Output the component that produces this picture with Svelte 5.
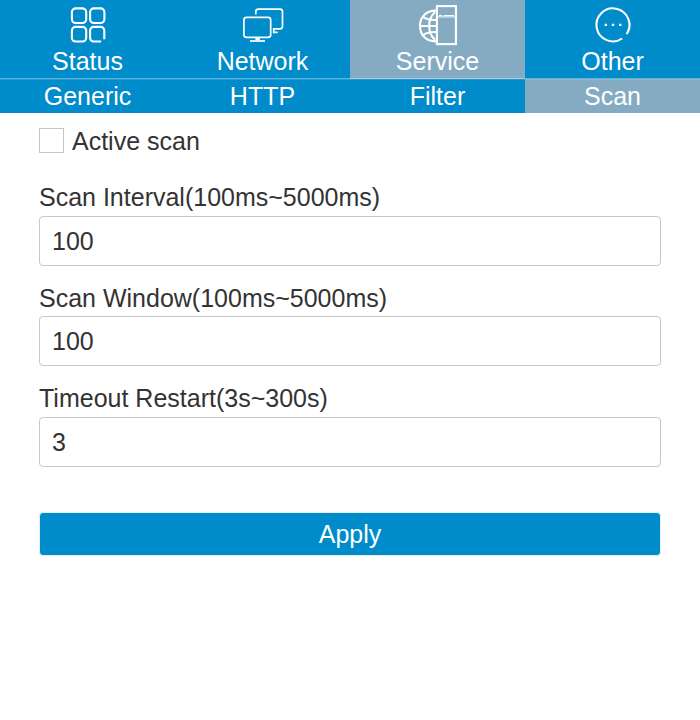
<script>
  const tabs = ['Status', 'Network', 'Service', 'Other'];
  const pages = ['Generic', 'HTTP', 'Filter', 'Scan'];
  let tab = $state('Service');
  let page = $state('Scan');
  let active = $state(false);
  let fields = $state([
    { id: 'interval', label: 'Scan Interval(100ms~5000ms)', value: '100' },
    { id: 'window', label: 'Scan Window(100ms~5000ms)', value: '100' },
    { id: 'timeout', label: 'Timeout Restart(3s~300s)', value: '3' }
  ]);
</script>

<nav class="main">
  {#each tabs as t}
    <button class:selected={tab === t} onclick={() => (tab = t)}>
      <svg width="59" height="50" viewBox="0 0 59 50" fill="none" stroke="#fff" stroke-width="2.1">
        {#if t === 'Status'}
          <g transform="translate(2 0)">
            <rect x="11.9" y="8.4" width="14.3" height="14.6" rx="3.8" />
            <rect x="30.1" y="8.4" width="14.3" height="14.6" rx="3.8" />
            <rect x="11.9" y="26.9" width="14.3" height="14.6" rx="3.8" />
            <path d="M41.2 41.5H33.7a3.6 3.6 0 0 1-3.6-3.6V30.5a3.6 3.6 0 0 1 3.6-3.6h7a3.6 3.6 0 0 1 3.6 3.6V39.2" />
          </g>
        {:else if t === 'Network'}
          <g transform="translate(2 0)">
            <g stroke-width="1.7">
              <rect x="8.9" y="17.4" width="26.8" height="20" rx="2.6" />
              <path d="M20.8 14.6V11.6a2.5 2.5 0 0 1 2.5-2.5H45a2.5 2.5 0 0 1 2.5 2.5V26.3a2.5 2.5 0 0 1-2.5 2.5H38.7v3.5h4" />
              <path d="M15 41h15" />
            </g>
            <path d="M20 37.5h5.2l-.6 2.8h-4z" fill="#fff" stroke="none" />
          </g>
        {:else if t === 'Service'}
          <rect x="28.9" y="6.1" width="19" height="38" />
          <path d="M28 10.6C18 10.4 12 17.2 12 26s6 15.6 16 15.4M27 12.2C22.5 16 21.2 20.5 21.2 26S22.5 36 27 39.8M12 26h17M15.4 17.2C19 19.8 24 20.2 29 20M15.4 34.8C19 32.2 24 31.8 29 32" />
          <path d="M29 16.9h19M31 15.5h3m1.5 0H46" stroke-width="1" />
        {:else}
          <path d="M39.2 38.5A16.5 16.5 0 1 1 43.6 34.1" stroke-width="2.1" />
          <path d="M21.6 24.8h2.4M28.8 24.8h2.4M36 24.8h2.4" stroke-width="2.3" />
        {/if}
      </svg>
      <span>{t}</span>
    </button>
  {/each}
</nav>
<nav class="sub">
  {#each pages as p}
    <button class:selected={page === p} onclick={() => (page = p)}>{p}</button>
  {/each}
</nav>

<main>
  <label class="check"><input type="checkbox" bind:checked={active} />Active scan</label>
  {#each fields as f}
    <div class="field">
      <label for={f.id}>{f.label}</label>
      <input id={f.id} type="text" bind:value={f.value} />
    </div>
  {/each}
  <button class="apply">Apply</button>
</main>

<style>
  :global(body) {
    margin: 0;
    background: #fff;
  }
  nav,
  main {
    font: 25px/29px 'Liberation Sans', Arial, sans-serif;
  }
  nav {
    display: grid;
    grid-template-columns: repeat(4, 1fr);
    background: #008bca;
  }
  button {
    font: inherit;
    color: #fff;
    background: #008bca;
    border: 0;
    margin: 0;
    padding: 0;
  }
  .selected {
    background: #84abc2;
  }
  .main button {
    display: flex;
    flex-direction: column;
    align-items: center;
    height: 79px;
    border-bottom: 1px solid rgba(255, 255, 255, 0.35);
  }
  .main svg {
    display: block;
    flex: none;
    margin-bottom: -3px;
  }
  .sub button {
    height: 34px;
    box-shadow: inset 0 1px rgba(255, 255, 255, 0.15);
  }
  main {
    padding: 14px 39px 0;
    color: #333;
  }
  .check {
    display: flex;
    align-items: flex-start;
    height: 28px;
    margin-bottom: 28px;
  }
  .check input {
    appearance: none;
    box-sizing: border-box;
    width: 25px;
    height: 25px;
    margin: 1px 8px 0 0;
    border: 1px solid #c3c3c8;
    background: #fff;
  }
  .check input:checked {
    background: #008bca;
  }
  .field {
    height: 100.5px;
  }
  .field label {
    display: block;
    height: 32.9px;
  }
  .field input {
    display: block;
    box-sizing: border-box;
    width: 100%;
    height: 50px;
    padding: 0.6px 12px 0;
    border: 1px solid #c8c8c8;
    border-radius: 4px;
    font: inherit;
    color: #333;
    background: #fff;
  }
  .apply {
    display: block;
    box-sizing: border-box;
    width: 100%;
    height: 44px;
    margin-top: 27.5px;
    padding-top: 1px;
    border: 1px solid #e6eef2;
    border-radius: 4px;
  }
</style>
